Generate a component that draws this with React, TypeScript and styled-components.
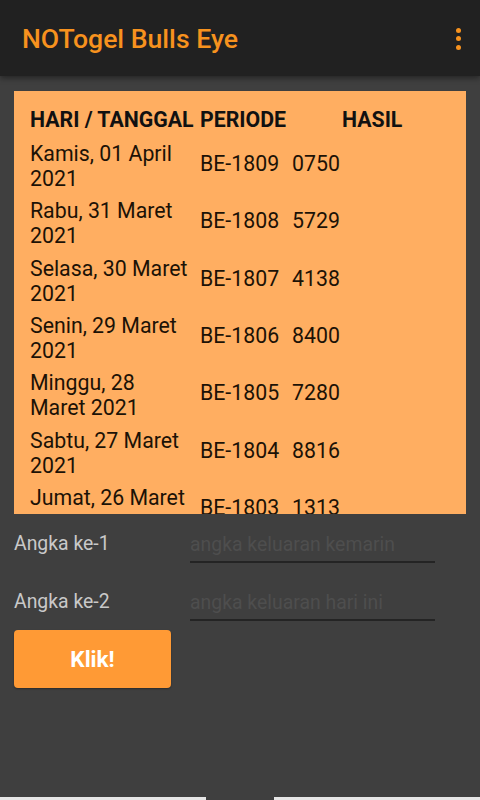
import React from 'react'
import styled, { createGlobalStyle } from 'styled-components'

const GlobalStyle = createGlobalStyle`
  html, body {
    margin: 0;
    padding: 0;
    background: #3f3f3f;
  }
  * { box-sizing: border-box; }
`

const results = [
  { day: 'Kamis, 01 April 2021', period: 'BE-1809', value: '0750' },
  { day: 'Rabu, 31 Maret 2021', period: 'BE-1808', value: '5729' },
  { day: 'Selasa, 30 Maret 2021', period: 'BE-1807', value: '4138' },
  { day: 'Senin, 29 Maret 2021', period: 'BE-1806', value: '8400' },
  { day: 'Minggu, 28 Maret 2021', period: 'BE-1805', value: '7280' },
  { day: 'Sabtu, 27 Maret 2021', period: 'BE-1804', value: '8816' },
  { day: 'Jumat, 26 Maret 2021', period: 'BE-1803', value: '1313' },
]

const App: React.FC = () => {
  return (
    <Screen>
      <GlobalStyle />
      <AppBar>
        <Title>NOTogel Bulls Eye</Title>
        <MenuButton aria-label="menu">
          <Dot />
          <Dot />
          <Dot />
        </MenuButton>
      </AppBar>
      <Content>
        <TablePanel>
          <HeaderRow>
            <HeadCell>HARI / TANGGAL</HeadCell>
            <HeadCell>PERIODE</HeadCell>
            <HeadCell $indent={50}>HASIL</HeadCell>
          </HeaderRow>
          {results.map((r) => (
            <DataRow key={r.period}>
              <DayCell>{r.day}</DayCell>
              <Cell>{r.period}</Cell>
              <Cell>{r.value}</Cell>
            </DataRow>
          ))}
        </TablePanel>
        <Field>
          <Label>Angka ke-1</Label>
          <Input placeholder="angka keluaran kemarin" />
        </Field>
        <Field>
          <Label>Angka ke-2</Label>
          <Input placeholder="angka keluaran hari ini" />
        </Field>
        <KlikButton>Klik!</KlikButton>
      </Content>
      <BottomEdge>
        <Handle />
      </BottomEdge>
    </Screen>
  )
}

const Screen = styled.div`
  height: 800px;
  display: flex;
  flex-direction: column;
  background: #3f3f3f;
  font-family: Roboto, "Liberation Sans", sans-serif;
`

const AppBar = styled.header`
  height: 76px;
  flex-shrink: 0;
  display: flex;
  align-items: center;
  justify-content: space-between;
  padding: 0 22px;
  background: #212121;
  box-shadow: 0 2px 6px rgba(0, 0, 0, 0.45);
  position: relative;
  z-index: 1;
`

const Title = styled.h1`
  margin: 0;
  font-size: 26.6px;
  font-weight: 500;
  color: #f7921e;
`

const MenuButton = styled.div`
  display: flex;
  flex-direction: column;
  gap: 3.5px;
  margin-right: -3px;
  padding-top: 1px;
`

const Dot = styled.span`
  width: 5px;
  height: 5px;
  border-radius: 50%;
  background: #f7921e;
`

const Content = styled.main`
  flex: 1;
  padding: 15px 14px 0;
  display: flex;
  flex-direction: column;
`

const TablePanel = styled.section`
  height: 423px;
  overflow: hidden;
  background: #ffae61;
  padding: 15px 16px 0;
`

const rowGrid = `
  display: grid;
  grid-template-columns: 170px 92px 1fr;
  align-items: center;
`

const HeaderRow = styled.div`
  ${rowGrid}
  height: 26px;
  margin-bottom: 7px;
`

const HeadCell = styled.div<{ $indent?: number }>`
  font-size: 21.3px;
  font-weight: 700;
  color: #111;
  white-space: nowrap;
  padding-left: ${(p) => p.$indent ?? 0}px;
`

const DataRow = styled.div`
  ${rowGrid}
  height: 57.3px;
  padding: 0 0 3px;
  color: #1c1206;
  font-size: 21.3px;
`

const DayCell = styled.div`
  line-height: 25px;
  padding-right: 10px;
`

const Cell = styled.div`
  line-height: 25px;
  padding-bottom: 5px;
`

const Field = styled.div`
  display: grid;
  grid-template-columns: 176px 245px;
  align-items: center;
  height: 58px;
  padding-top: 3px;
`

const Label = styled.label`
  font-size: 19.4px;
  color: #c9c9c9;
  padding-bottom: 3px;
`

const Input = styled.input`
  font-family: Roboto, "Liberation Sans", sans-serif;
  font-size: 19.4px;
  color: #ddd;
  background: transparent;
  border: none;
  border-bottom: 2px solid #242424;
  padding: 6px 0 5px;
  outline: none;
  &::placeholder {
    color: #4e4e4e;
  }
`

const KlikButton = styled.button`
  width: 157px;
  height: 58px;
  border: none;
  border-radius: 4px;
  background: #ff9a35;
  color: #fff;
  font-family: Roboto, "Liberation Sans", sans-serif;
  font-size: 22.5px;
  font-weight: 700;
  box-shadow: 0 1px 2px rgba(0, 0, 0, 0.35);
`

const BottomEdge = styled.div`
  height: 3px;
  flex-shrink: 0;
  background: #e6e6e6;
  display: flex;
  justify-content: center;
`

const Handle = styled.div`
  width: 68px;
  height: 3px;
  background: #3f3f3f;
`

export default App
